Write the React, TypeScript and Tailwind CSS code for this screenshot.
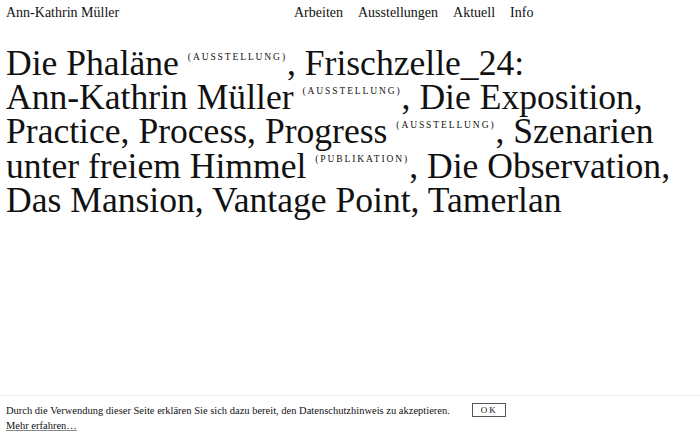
import React from "react";

const serif = "font-['Liberation_Serif','Times_New_Roman',serif]";

type Entry = { title: string; tag?: string; sep: string };

const entries: Entry[] = [
  { title: "Die Phaläne", tag: "Ausstellung", sep: ", " },
  { title: "Frischzelle_24: Ann-Kathrin Müller", tag: "Ausstellung", sep: ", " },
  { title: "Die Exposition, Practice, Process, Progress", tag: "Ausstellung", sep: ", " },
  { title: "Szenarien unter freiem Himmel", tag: "Publikation", sep: ", " },
  { title: "Die Observation", sep: ", " },
  { title: "Das Mansion", sep: ", " },
  { title: "Vantage Point", sep: ", " },
  { title: "Tamerlan", sep: "" },
];

function Tag({ label }: { label: string }) {
  return (
    <span className="inline-block align-top pt-[6.5px] text-[9.5px] leading-none uppercase tracking-[0.2em]">
      ({label})
    </span>
  );
}

// keeps hyphenated names like "Ann-Kathrin" together on one line
function Title({ text }: { text: string }) {
  const words = text.split(" ");
  return (
    <a href="#">
      {words.map((w, i) => (
        <React.Fragment key={i}>
          <span className="whitespace-nowrap">{w}</span>
          {i < words.length - 1 && " "}
        </React.Fragment>
      ))}
    </a>
  );
}

export default function App() {
  return (
    <div className={`${serif} min-h-screen bg-white text-[#111]`}>
      <header className="grid grid-cols-[288px_1fr] px-[6px] pt-[5px] text-[14px] leading-[16px]">
        <a href="#">Ann-Kathrin Müller</a>
        <nav className="flex gap-[15px]">
          <a href="#">Arbeiten</a>
          <a href="#">Ausstellungen</a>
          <a href="#">Aktuell</a>
          <a href="#">Info</a>
        </nav>
      </header>

      <main className="px-[6px] pt-[25px]">
        <p className="text-[35.6px] leading-[34.2px]">
          {entries.map((e) => (
            <React.Fragment key={e.title}>
              <Title text={e.title} />
              {e.tag && (
                <>
                  {" "}
                  <Tag label={e.tag} />
                </>
              )}
              {e.sep}
            </React.Fragment>
          ))}
        </p>
      </main>

      <div className="fixed bottom-0 left-0 right-0 border-t border-[#eee] bg-white px-[6px] pt-[7px] pb-[5px] text-[10.5px] leading-[15px]">
        <div className="flex items-start gap-[22px]">
          <span>
            Durch die Verwendung dieser Seite erklären Sie sich dazu bereit, den Datenschutzhinweis zu akzeptieren.
          </span>
          <button className="border border-[#555] px-[8px] text-[9px] leading-[12px] tracking-[0.2em]">
            OK
          </button>
        </div>
        <a href="#" className="underline decoration-[#888]">
          Mehr erfahren…
        </a>
      </div>
    </div>
  );
}
